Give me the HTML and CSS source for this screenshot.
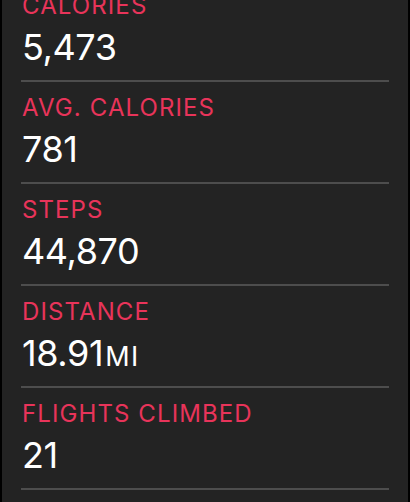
FILE: index.html
```html
<!DOCTYPE html>
<html>
<head>
<meta charset="utf-8">
<link rel="stylesheet" href="styles.css">
</head>
<body>
<main class="panel">
  <ul class="list">
    <li class="item"><div class="label">CALORIES</div><div class="value">5,473</div></li>
    <li class="item"><div class="label">AVG. CALORIES</div><div class="value">781</div></li>
    <li class="item"><div class="label">STEPS</div><div class="value">44,870</div></li>
    <li class="item"><div class="label">DISTANCE</div><div class="value">18.91<span class="unit">MI</span></div></li>
    <li class="item"><div class="label">FLIGHTS CLIMBED</div><div class="value">21</div></li>
  </ul>
</main>
</body>
</html>
```
FILE: styles.css
```css
html, body {
  margin: 0;
  padding: 0;
  background: #000;
  height: 502px;
  overflow: hidden;
}
.panel {
  display: flex;
  flex-direction: column;
  margin: 0 2px;
  height: 502px;
  background: #232323;
  padding: 0 19px;
  box-sizing: border-box;
  overflow: hidden;
  font-family: Inter, "Liberation Sans", sans-serif;
}
.list {
  list-style: none;
  margin: -20px 0 0 0;
  padding: 0;
}
.item {
  padding: 12px 0 13px 1px;
  border-bottom: 2px solid #4d4d4d;
}
.label {
  color: #e8345a;
  font-size: 24px;
  line-height: 28px;
  letter-spacing: 1.1px;
}
.value {
  margin-top: 7px;
  color: #fff;
  font-size: 36px;
  line-height: 40px;
  height: 40px;
  letter-spacing: -0.4px;
}
.unit {
  font-size: 27px;
  line-height: 1;
  margin-left: 2px;
  letter-spacing: 1.5px;
}
```
